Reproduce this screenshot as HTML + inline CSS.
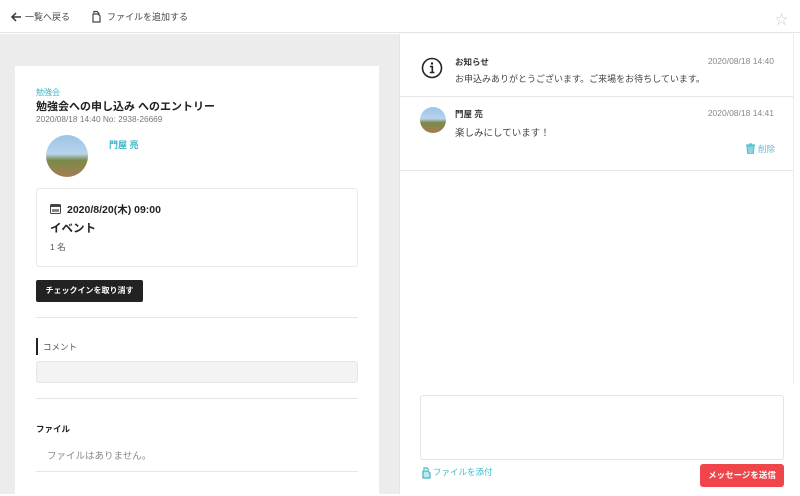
<!DOCTYPE html>
<html><head><meta charset="utf-8"><style>
*{box-sizing:border-box;margin:0;padding:0}
body{width:800px;height:494px;overflow:hidden;background:#fff;font-family:"Liberation Sans","Noto Sans CJK JP",sans-serif;color:#333;position:relative}
.a{position:absolute;white-space:nowrap}
.hr{position:absolute;height:1px;background:#e6e6e6}
.av{position:absolute;border-radius:50%;overflow:hidden;background:linear-gradient(180deg,#9cc3e6 0%,#b8d4ec 45%,#7a8a4a 60%,#a67c52 100%)}
</style></head><body>
<div class="a" style="left:0;top:0;width:800px;height:33px;background:#fff;border-bottom:1px solid #e4e4e4"></div>
<svg class="a" style="left:10px;top:11px" width="12" height="12" viewBox="0 0 12 12"><path d="M11 6H2M6 2L2 6l4 4" stroke="#333" stroke-width="1.5" fill="none"/></svg>
<div class="a" style="left:25px;top:10px;font-size:9px;color:#444">一覧へ戻る</div>
<svg class="a" style="left:91px;top:10px" width="12" height="13" viewBox="0 0 12 13"><path d="M3 3V1.5h3l2 2V5M2 4h5l2 2v6H2z" stroke="#444" stroke-width="1.2" fill="none"/></svg>
<div class="a" style="left:107px;top:10px;font-size:9px;color:#444">ファイルを追加する</div>
<div class="a" style="left:775px;top:9px;font-size:13px;color:#ccc">☆</div>
<div class="a" style="left:0;top:34px;width:399px;height:460px;background:#ececec"></div>
<div class="a" style="left:15px;top:66px;width:364px;height:430px;background:#fff"></div>
<div class="a" style="left:36px;top:87px;font-size:8px;color:#3bb7c9">勉強会</div>
<div class="a" style="left:36px;top:98px;font-size:11px;font-weight:bold;color:#222">勉強会への申し込み へのエントリー</div>
<div class="a" style="left:36px;top:114px;font-size:8.3px;color:#777">2020/08/18 14:40 No: 2938-26669</div>
<div class="av" style="left:46px;top:135px;width:42px;height:42px"></div>
<div class="a" style="left:109px;top:138px;font-size:9px;font-weight:bold;color:#3bb7c9">門屋 亮</div>
<div class="a" style="left:36px;top:188px;width:322px;height:79px;border:1px solid #eaeaea;border-radius:3px"></div>
<svg class="a" style="left:50px;top:203px" width="11" height="11" viewBox="0 0 11 11"><rect x="0.5" y="1.5" width="10" height="9" rx="1" fill="none" stroke="#444"/><rect x="0.5" y="1.5" width="10" height="2.5" fill="#444"/><rect x="2" y="6" width="7" height="3" fill="#888"/></svg>
<div class="a" style="left:67px;top:202px;font-size:10.5px;font-weight:bold;color:#222">2020/8/20(木) 09:00</div>
<div class="a" style="left:50px;top:220px;font-size:11.5px;font-weight:bold;color:#222">イベント</div>
<div class="a" style="left:50px;top:241px;font-size:8.5px;color:#555">1 名</div>
<div class="a" style="left:36px;top:280px;width:107px;height:22px;background:#222;border-radius:2px;color:#fff;font-size:8px;font-weight:bold;text-align:center;line-height:22px">チェックインを取り消す</div>
<div class="hr" style="left:36px;top:317px;width:322px"></div>
<div class="a" style="left:36px;top:338px;width:2px;height:17px;background:#222"></div>
<div class="a" style="left:43px;top:341px;font-size:8.5px;color:#555">コメント</div>
<div class="a" style="left:36px;top:361px;width:322px;height:22px;background:#f3f3f3;border:1px solid #e5e5e5;border-radius:3px"></div>
<div class="hr" style="left:36px;top:398px;width:322px"></div>
<div class="a" style="left:36px;top:423px;font-size:8.5px;font-weight:bold;color:#222">ファイル</div>
<div class="a" style="left:47px;top:448px;font-size:9.5px;color:#888">ファイルはありません。</div>
<div class="hr" style="left:36px;top:471px;width:322px"></div>
<div class="a" style="left:399px;top:34px;width:1px;height:460px;background:#e4e4e4"></div>
<div class="a" style="left:793px;top:34px;width:1px;height:350px;background:#ececec"></div>
<svg class="a" style="left:421px;top:57px" width="22" height="22" viewBox="0 0 22 22"><circle cx="11" cy="11" r="9.5" fill="none" stroke="#222" stroke-width="1.6"/><circle cx="11" cy="6.5" r="1.2" fill="#222"/><path d="M9 9.5h2.3v6M8.8 15.5h4.6" stroke="#222" stroke-width="1.6" fill="none"/></svg>
<div class="a" style="left:455px;top:56px;font-size:8.5px;font-weight:bold;color:#333">お知らせ</div>
<div class="a" style="right:26px;top:56px;font-size:8.5px;color:#888">2020/08/18 14:40</div>
<div class="a" style="left:455px;top:72px;font-size:9px;color:#444">お申込みありがとうございます。ご来場をお待ちしています。</div>
<div class="hr" style="left:400px;top:96px;width:393px"></div>
<div class="av" style="left:420px;top:107px;width:26px;height:26px"></div>
<div class="a" style="left:455px;top:108px;font-size:8.5px;font-weight:bold;color:#333">門屋 亮</div>
<div class="a" style="right:26px;top:108px;font-size:8.5px;color:#888">2020/08/18 14:41</div>
<div class="a" style="left:455px;top:125px;font-size:9.5px;color:#444">楽しみにしています！</div>
<svg class="a" style="left:746px;top:143px" width="9" height="11" viewBox="0 0 9 11"><path d="M0 2h9M3 1h3M1 3h7l-.7 8H1.7z" stroke="#5bc0d0" stroke-width="1.2" fill="#8fd3de"/></svg>
<div class="a" style="left:758px;top:143px;font-size:8.5px;color:#5bc0d0">削除</div>
<div class="hr" style="left:400px;top:170px;width:393px"></div>
<div class="a" style="left:420px;top:395px;width:364px;height:65px;border:1px solid #e4e4e4;border-radius:3px"></div>
<svg class="a" style="left:421px;top:467px" width="10" height="12" viewBox="0 0 10 12"><path d="M2 4h5l2 2v5H2z" stroke="#3bb7c9" stroke-width="1.2" fill="#bfe7ee"/><path d="M3 3V1h3l2 2" stroke="#3bb7c9" stroke-width="1.2" fill="none"/></svg>
<div class="a" style="left:433px;top:466px;font-size:8.5px;color:#3bb7c9">ファイルを添付</div>
<div class="a" style="left:700px;top:464px;width:84px;height:23px;background:#f0454a;border-radius:3px;color:#fff;font-size:8.5px;font-weight:bold;text-align:center;line-height:23px">メッセージを送信</div>
</body></html>
